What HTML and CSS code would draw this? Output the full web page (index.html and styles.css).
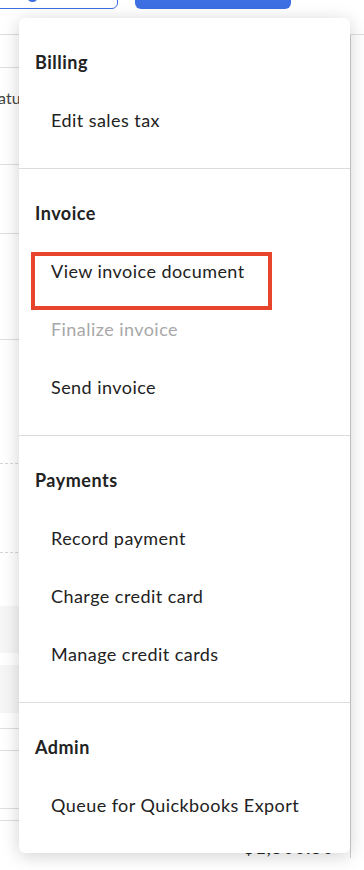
FILE: index.html
```html
<!DOCTYPE html>
<html lang="en">
<head>
  <meta charset="UTF-8" />
  <title>Invoice actions</title>
  <meta name="viewport" content="width=device-width, initial-scale=1.0">
  <link rel="stylesheet" href="styles.css">
</head>
<body>
  <div class="page">
    <div class="toolbar">
      <button class="btn-outline"><span class="btn-dot"></span></button>
      <button class="btn-primary"></button>
    </div>
    <div class="rule"></div>

    <div class="table">
      <div class="row row-head"></div>
      <div class="row row-status"><span class="cell-label">Status</span></div>
      <div class="row row-a"></div>
      <div class="row row-b"></div>
      <div class="row row-c dashed"></div>
      <div class="row row-d dashed"></div>
      <div class="row row-e"></div>
      <div class="shade"></div>
      <div class="shade shade-2"></div>
      <div class="row row-f"></div>
      <div class="row row-g"></div>
      <div class="row row-h"></div>
      <div class="row row-i"></div>
      <div class="total">$1,500.50</div>
    </div>

    <div class="menu">
      <div class="menu-section">
        <div class="menu-title">Billing</div>
        <div class="menu-item">Edit sales tax</div>
      </div>
      <div class="menu-section">
        <div class="menu-title">Invoice</div>
        <div class="menu-item">View invoice document<span class="highlight"></span></div>
        <div class="menu-item disabled">Finalize invoice</div>
        <div class="menu-item">Send invoice</div>
      </div>
      <div class="menu-section">
        <div class="menu-title">Payments</div>
        <div class="menu-item">Record payment</div>
        <div class="menu-item">Charge credit card</div>
        <div class="menu-item">Manage credit cards</div>
      </div>
      <div class="menu-section">
        <div class="menu-title">Admin</div>
        <div class="menu-item">Queue for Quickbooks Export</div>
      </div>
    </div>
  </div>
</body>
</html>
```

FILE: styles.css
```css
body {
  margin: 0;
  font-family: Lato, 'Open Sans', sans-serif;
  background: #fff;
  color: #222;
  height: 870px;
  overflow: hidden;
}
.page {
  position: relative;
  display: flow-root;
  height: 870px;
}
.toolbar {
  display: flex;
  gap: 17px;
  margin-top: -24px;
  height: 33px;
}
.btn-outline {
  position: relative;
  width: 128px;
  margin-left: -10px;
  border: 1px solid #3d6fe3;
  border-radius: 6px;
  background: #fff;
}
.btn-dot {
  position: absolute;
  left: 36px;
  bottom: 6px;
  width: 7px;
  height: 7px;
  border: 2px solid #3d6fe3;
  border-radius: 50%;
}
.btn-primary {
  width: 156px;
  border: none;
  border-radius: 6px;
  background: #3d6fe3;
}
.rule {
  margin-top: 25px;
  border-top: 1px solid #dedede;
}
.table {
  width: 350px;
  border-right: 1px solid #cfcfcf;
}
.row {
  border-bottom: 1px solid #dedede;
  box-sizing: border-box;
}
.row.dashed {
  border-bottom: 1px dashed #d6d6d6;
}
.row-head { height: 33px; }
.row-status {
  height: 97px;
  display: flex;
  align-items: center;
}
.cell-label {
  margin-left: -16px;
  font-size: 16px;
  color: #444;
  padding-bottom: 38px;
}
.row-a { height: 69px; }
.row-b { height: 106px; }
.row-c { height: 124px; }
.row-d { height: 89px; }
.row-e { height: 53px; border-bottom: none; }
.shade {
  height: 47px;
  background: #f6f6f6;
}
.shade-2 {
  margin-top: 12px;
  height: 48px;
}
.row-f { height: 16px; }
.row-g { height: 22px; }
.row-h { height: 58px; }
.row-i { height: 12px; }
.total {
  text-align: right;
  padding: 14px 16px 0 0;
  font-size: 19px;
  letter-spacing: 0.5px;
  color: #222;
}
.menu {
  position: absolute;
  left: 19px;
  top: 18px;
  width: 331px;
  background: #fff;
  border-radius: 6px;
  box-shadow: 0 3px 18px rgba(0, 0, 0, 0.18);
}
.menu-section {
  padding: 17px 0;
  border-top: 1px solid #dcdcdc;
}
.menu-section:first-child {
  border-top: none;
}
.menu-title {
  height: 58px;
  line-height: 54px;
  padding-left: 16px;
  font-size: 18px;
  font-weight: 700;
  letter-spacing: 0.5px;
  color: #222;
}
.menu-item {
  position: relative;
  height: 58px;
  line-height: 54px;
  padding-left: 32px;
  font-size: 18px;
  letter-spacing: 0.45px;
  color: #222;
}
.menu-item.disabled {
  color: #a8a8a8;
}
.highlight {
  position: absolute;
  left: 12px;
  top: 8px;
  width: 241px;
  height: 58px;
  border: 4px solid #e8432b;
  box-sizing: border-box;
}
```
